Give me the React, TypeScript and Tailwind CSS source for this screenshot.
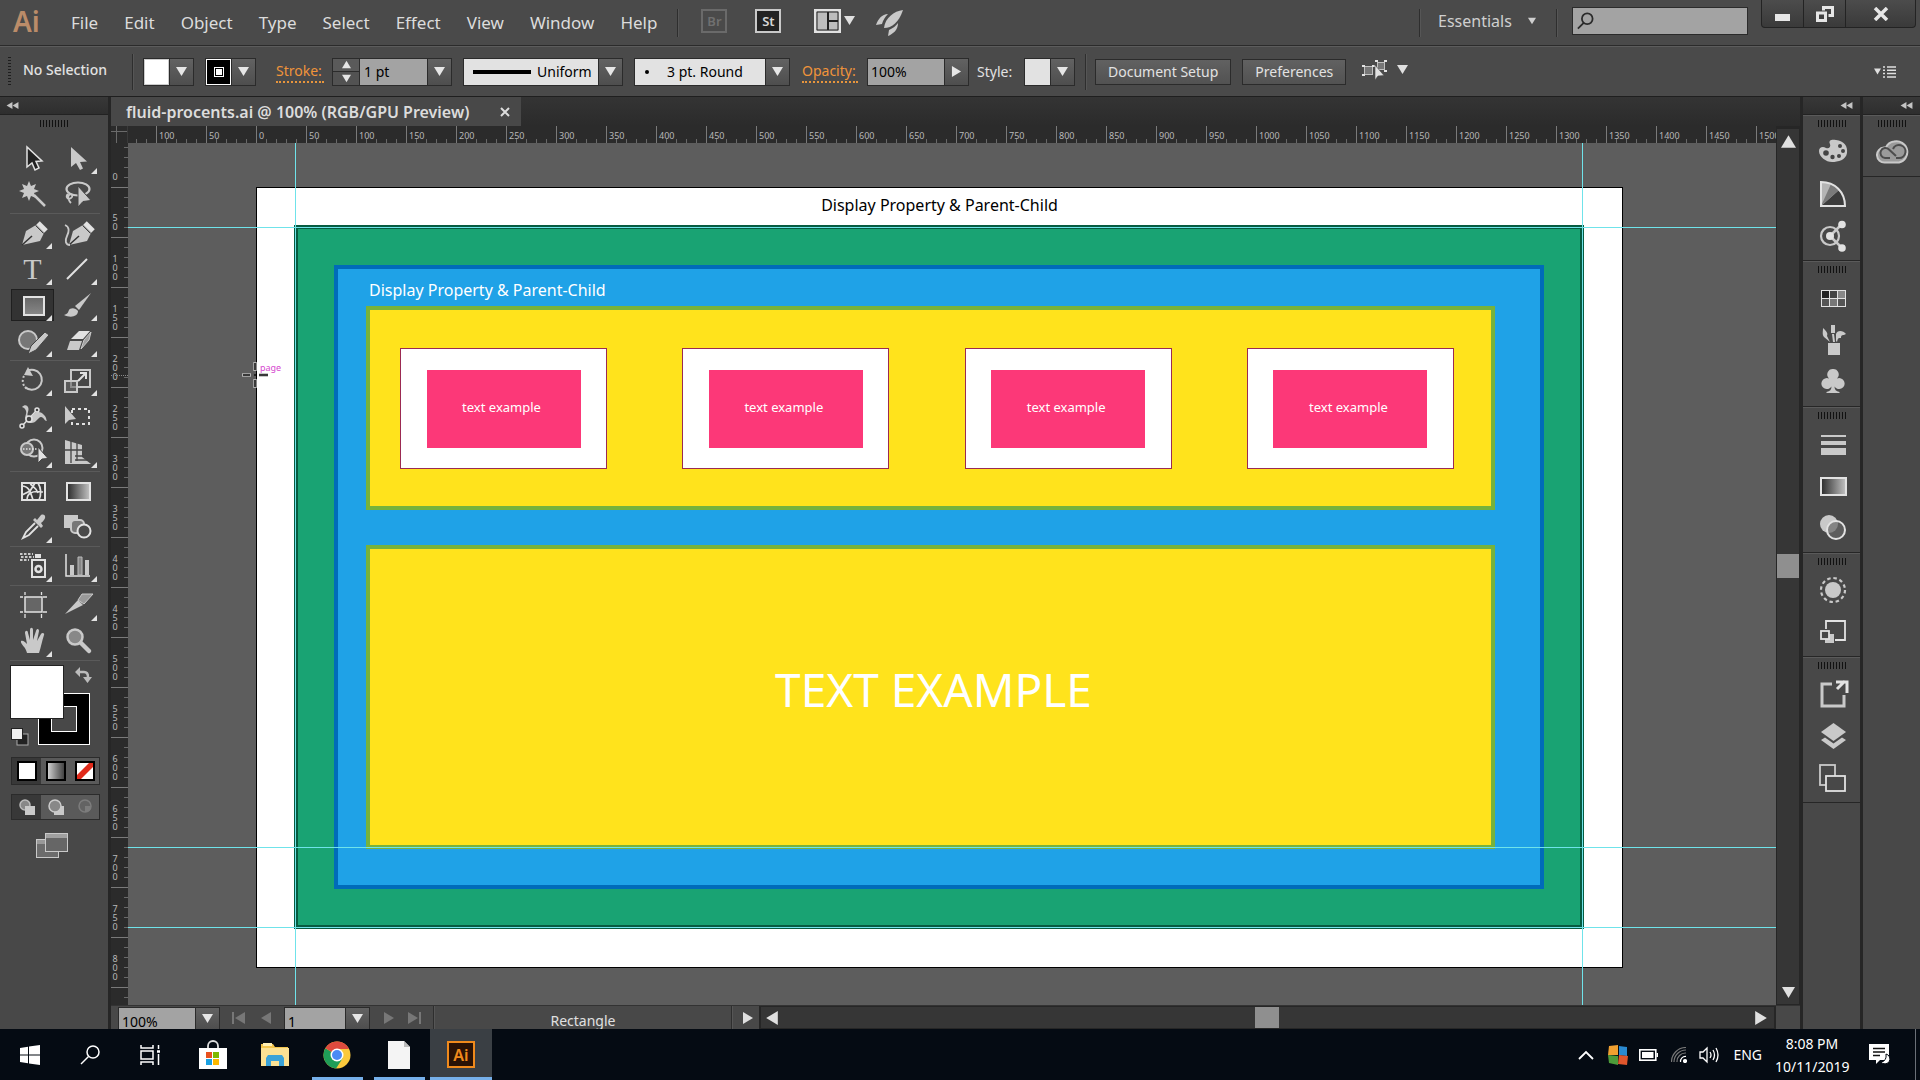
import React from 'react';

const G = '#c9c9c9';
const L = '#e2e2e2';

function Tri({ dir = 'down', size = 12, className = '' }: { dir?: 'down' | 'up' | 'left' | 'right'; size?: number; className?: string }) {
  const pts = {
    down: '0,1 12,1 6,11',
    up: '0,11 12,11 6,1',
    left: '11,0 11,12 1,6',
    right: '1,0 1,12 11,6',
  }[dir];
  return (
    <svg width={size} height={size} viewBox="0 0 12 12" className={`shrink-0 ${className}`} aria-hidden="true">
      <polygon points={pts} fill="currentColor" />
    </svg>
  );
}

function Sep({ className = '' }: { className?: string }) {
  return <span className={`w-[2px] shrink-0 border-l border-[#2e2e2e] bg-[#565656] ${className}`} />;
}

function ArrowBox({ label, dir = 'down' }: { label: string; dir?: 'down' | 'right' }) {
  return (
    <button aria-label={label} className="flex h-full w-6 shrink-0 items-center justify-center border-l border-[#2b2b2b] bg-linear-to-b from-[#626262] to-[#4e4e4e] text-[#e6e6e6]">
      <Tri dir={dir} size={11} />
    </button>
  );
}

const fieldBox = 'flex h-7 shrink-0 items-stretch border border-[#2b2b2b]';

/* ---------- Menu bar ---------- */

function MenuBar() {
  return (
    <header className="flex h-[46px] shrink-0 items-center border-b border-[#2b2b2b] bg-[#4a4a4a] text-[#dcdcdc]">
      <span className="-mt-1 ml-[13px] w-[58px] text-[28px] leading-8 font-semibold text-[#bb8c69]">Ai</span>
      <nav className="flex gap-[26px] text-[17px] leading-6">
        {['File', 'Edit', 'Object', 'Type', 'Select', 'Effect', 'View', 'Window', 'Help'].map((m) => (
          <button key={m}>{m}</button>
        ))}
      </nav>
      <Sep className="ml-5 h-7" />
      <button className="-mt-1 ml-[22px] h-6 w-[26px] border-2 border-[#6a6a6a] text-[13px] leading-5 font-semibold text-[#707070]">Br</button>
      <button className="-mt-1 ml-7 h-6 w-[26px] border-2 border-[#c9c9c9] bg-[#222] text-[13px] leading-5 font-semibold text-[#d6d6d6]">St</button>
      <button aria-label="Arrange documents" className="-mt-1 ml-[33px] flex items-center gap-[3px] text-[#e0e0e0]">
        <svg width="27" height="24" viewBox="0 0 27 24">
          <rect x="1" y="1" width="25" height="22" fill="#bdbdbd" stroke={L} strokeWidth="2" />
          <path d="M3 3h21v18H3z" fill="none" stroke="#222" />
          <path d="M14 3v18M14 12h10" stroke="#222" strokeWidth="2" />
        </svg>
        <Tri size={11} />
      </button>
      <button aria-label="GPU performance" className="ml-[21px]">
        <svg width="28" height="28" viewBox="0 0 28 28" fill={G}>
          <path d="M27 1C18 2 9 9 8 19c8 0 15-6 19-18z" />
          <path d="M12 5C6 5 2 10 0 16l6-1c1-4 3-7 6-10z" />
          <path d="M22 14c-2 3-5 5-9 7l-1 6c5-2 10-6 10-13z" />
        </svg>
      </button>
      <div className="flex-1" />
      <Sep className="h-7" />
      <label className="relative -mt-1 ml-[17px] flex items-center text-[16px] leading-6 text-[#cfcfcf]">
        <select aria-label="Workspace" className="w-[98px] appearance-none bg-transparent outline-none">
          <option>Essentials</option>
        </select>
        <Tri size={8} className="pointer-events-none absolute right-0" />
      </label>
      <Sep className="ml-5 h-7" />
      <label className="-mt-[3px] ml-[14px] flex h-7 w-[176px] items-center border border-[#2b2b2b] bg-[#a3a3a3] px-1">
        <svg width="20" height="20" viewBox="0 0 20 20" fill="none" stroke="#2b2b2b" strokeWidth="2">
          <circle cx="11.500" cy="7.500" r="6" />
          <path d="M7.500 12L1 18.500" />
        </svg>
        <input aria-label="Search" className="w-full bg-transparent text-sm text-black outline-none" />
      </label>
      <div className="mr-1 ml-[13px] flex h-7 self-start rounded-b border border-t-0 border-[#232323] bg-linear-to-b from-[#4c4c4c] to-[#3a3a3a]">
        <button aria-label="Minimize" className="flex w-[42px] items-center justify-center border-r border-[#232323]">
          <span className="mt-2 h-[7px] w-[15px] bg-[#e6e6e6]" />
        </button>
        <button aria-label="Restore" className="flex w-[42px] items-center justify-center border-r border-[#232323]">
          <svg width="18" height="16" viewBox="0 0 18 16" fill="none" stroke="#e6e6e6" strokeWidth="3">
            <path d="M7.500 4.500V1.500h9v8h-4M1.500 7h8v7.500h-8z" />
          </svg>
        </button>
        <button aria-label="Close" className="flex w-[69px] items-center justify-center">
          <svg width="16" height="14" viewBox="0 0 16 14" stroke="#e6e6e6" strokeWidth="3.500">
            <path d="M2 1l12 12M14 1L2 13" />
          </svg>
        </button>
      </div>
    </header>
  );
}

/* ---------- Control bar ---------- */

function ControlBar() {
  return (
    <div className="flex h-[51px] shrink-0 items-center border-t border-b border-t-[#5c5c5c] border-b-[#1f1f1f] bg-[#4a4a4a] text-[14px] leading-5 text-[#e2e2e2]">
      <span className="ml-2 h-[30px] w-[3px] shrink-0 bg-[repeating-linear-gradient(to_bottom,#1e1e1e_0_1px,transparent_1px_3px)]" />
      <span className="-mt-1 ml-3 w-[109px] shrink-0 font-medium">No Selection</span>
      <Sep className="h-9" />
      <div className={`${fieldBox} ml-[9px] w-[51px]`}>
        <button aria-label="Fill colour" className="flex-1 border border-[#ccc] bg-white" />
        <ArrowBox label="Fill options" />
      </div>
      <div className={`${fieldBox} ml-[11px] w-[51px]`}>
        <button aria-label="Stroke colour" className="flex flex-1 items-center justify-center border border-white bg-black">
          <span className="flex size-[10px] items-center justify-center border border-white">
            <span className="size-[6px] bg-white" />
          </span>
        </button>
        <ArrowBox label="Stroke options" />
      </div>
      <label htmlFor="stroke" className="ml-5 w-12 shrink-0 border-b-2 border-dotted border-[#e8953c] text-[#f0943a]">Stroke:</label>
      <div className={`${fieldBox} ml-2 w-[120px]`}>
        <div className="flex w-[26px] flex-col text-[#e6e6e6]">
          <button aria-label="Increase stroke" className="flex flex-1 items-center justify-center border-b border-[#2b2b2b] bg-[#5a5a5a]"><Tri dir="up" size={9} /></button>
          <button aria-label="Decrease stroke" className="flex flex-1 items-center justify-center bg-[#525252]"><Tri size={9} /></button>
        </div>
        <input id="stroke" defaultValue="1 pt" className="w-0 flex-1 border-l border-[#2b2b2b] bg-[#a3a3a3] pl-1 text-black outline-none" />
        <ArrowBox label="Stroke weights" />
      </div>
      <div className={`${fieldBox} relative ml-[11px] w-[160px] bg-[#e2e2e2] text-black`}>
        <span className="ml-[9px] h-1 w-[58px] self-center bg-black" />
        <select aria-label="Width profile" className="w-0 flex-1 appearance-none bg-transparent pl-[6px] outline-none">
          <option>Uniform</option>
        </select>
        <ArrowBox label="Width profiles" />
      </div>
      <div className={`${fieldBox} ml-[11px] w-[156px] bg-[#e2e2e2] text-black`}>
        <span className="ml-[10px] size-1 self-center rounded-full bg-black" />
        <select aria-label="Brush definition" className="w-0 flex-1 appearance-none bg-transparent pl-[18px] outline-none">
          <option>3 pt. Round</option>
        </select>
        <ArrowBox label="Brushes" />
      </div>
      <label htmlFor="opacity" className="ml-3 w-[56px] shrink-0 border-b-2 border-dotted border-[#e8953c] text-[#f0943a]">Opacity:</label>
      <div className={`${fieldBox} ml-[9px] w-[102px]`}>
        <input id="opacity" defaultValue="100%" className="w-0 flex-1 bg-[#a3a3a3] pl-[3px] text-black outline-none" />
        <ArrowBox label="Opacity slider" dir="right" />
      </div>
      <span className="ml-2 w-[38px] shrink-0">Style:</span>
      <div className={`${fieldBox} ml-[9px] w-[51px]`}>
        <button aria-label="Graphic style" className="flex-1 bg-[#e2e2e2]" />
        <ArrowBox label="Graphic styles" />
      </div>
      <Sep className="ml-[10px] h-9" />
      <button className="ml-2 h-[26px] shrink-0 border border-[#2b2b2b] bg-linear-to-b from-[#616161] to-[#525252] px-3">Document Setup</button>
      <button className="ml-[11px] h-[26px] shrink-0 border border-[#2b2b2b] bg-linear-to-b from-[#616161] to-[#525252] px-3">Preferences</button>
      <button aria-label="Select similar" className="-mt-1 ml-4 flex items-center gap-[9px] text-[#e0e0e0]">
        <svg width="26" height="20" viewBox="0 0 26 20" fill="none">
          <rect x="2.500" y="6.500" width="8" height="8" fill="#777" stroke="#c0c0c0" />
          <rect x="15.500" y="2.500" width="7" height="7" fill="#777" stroke="#c0c0c0" />
          <path d="M0 5h3v2H0zM10 5h3v2h-3zM0 14h3v2H0zM13 0h3v2h-3zM22 0h3v2h-3zM22 10h3v2h-3z" fill={L} />
          <path d="M13 5v15l3-4 6-.500z" fill={L} stroke="#4a4a4a" strokeWidth="0.600" />
        </svg>
        <Tri size={11} />
      </button>
      <div className="flex-1" />
      <button aria-label="Panel menu" className="mr-6 flex items-center gap-[2px] text-[#e0e0e0]">
        <Tri size={7} />
        <svg width="13" height="12" viewBox="0 0 13 12" stroke="#e0e0e0" strokeWidth="1.500">
          <path d="M0 1h2M4 1h9M0 4.300h2M4 4.300h9M0 7.600h2M4 7.600h9M0 11h2M4 11h9" />
        </svg>
      </button>
    </div>
  );
}

/* ---------- Tools panel ---------- */

const nib = (
  <>
    <path d="M3 26L7 12l10-6 8 8-4 8z" fill={G} />
    <path d="M3 26l10-9" stroke="#333" strokeWidth="1.500" />
    <path d="M19 4l8 8" stroke={L} strokeWidth="5" />
    <path d="M16.500 6.500l8 8" stroke="#444" strokeWidth="1" />
  </>
);

const I: Record<string, React.ReactNode> = {
  Selection: <path d="M8 3v20l5-4 3 7 4-2-3-6.500 6-.5z" fill="#222" stroke={L} strokeWidth="1.500" />,
  'Direct Selection': <path d="M7 3v20l5-4 4 7 3-1.500-3-6.500 7-.5z" fill={G} />,
  'Magic Wand': (
    <>
      <path d="M10 1l2 5 5-2-2 5 5 2-5 2 2 5-5-2-2 5-2-5-5 2 2-5-5-2 5-2-2-5 5 2z" fill={G} />
      <path d="M15 15l11 11" stroke={G} strokeWidth="2.500" />
    </>
  ),
  Lasso: (
    <>
      <ellipse cx="14" cy="9" rx="11.500" ry="6.500" stroke={G} strokeWidth="2.200" />
      <path d="M4 14c-3 3 0 6 3 4s0-5-2-3 0 6 2 8" stroke={G} strokeWidth="1.800" />
      <path d="M14 6v21l5-5.500 8-1z" fill={G} stroke="#444" />
    </>
  ),
  Pen: nib,
  Curvature: (
    <>
      <g transform="translate(2 0)">{nib}</g>
      <path d="M1 6c5 2 4 7 2 11s-2 9 3 9" stroke={G} strokeWidth="1.800" />
    </>
  ),
  Line: <path d="M3 24L23 4" stroke={L} strokeWidth="2" />,
  Rectangle: <rect x="5" y="6" width="20" height="18" fill="url(#rg)" stroke={L} strokeWidth="2" />,
  Paintbrush: (
    <>
      <path d="M27 2L15 19l-4-4z" fill={G} />
      <path d="M14 20c0 6-8 7-14 4 4-1 4-3 5-5s6-3 9 1z" fill={G} />
    </>
  ),
  Shaper: (
    <>
      <circle cx="9" cy="13" r="9" fill="#777" stroke={G} strokeWidth="2" />
      <path d="M30 8l-4-3-14 14-3 8 8-4z" fill={G} stroke="#444" />
    </>
  ),
  Eraser: (
    <>
      <path d="M3 23l3-9h12l-3 9z" fill={G} />
      <path d="M7 12l8-8h11l-7 8z" fill={L} />
      <path d="M17 22l3-9 7-8-2 8z" fill="#a0a0a0" stroke={G} />
    </>
  ),
  Rotate: (
    <>
      <path d="M8 5a10 10 0 1 1-2 16" stroke={G} strokeWidth="2" />
      <path d="M5 10a10 10 0 0 0 3 13" stroke={G} strokeWidth="2" strokeDasharray="2 2" />
      <path d="M5 9l4-8 5 9z" fill={G} />
    </>
  ),
  Scale: (
    <>
      <rect x="7" y="4" width="19" height="17" stroke={G} strokeWidth="2" />
      <rect x="1" y="15" width="12" height="11" fill="#666" fillOpacity="0.600" stroke={G} strokeWidth="2" />
      <path d="M14 15l7-7M16 7h6v6" stroke={L} strokeWidth="2" />
    </>
  ),
  Width: (
    <>
      <path d="M3 5c4-4 8 0 6 5s2 7 5 3 8-4 11 0c3 3 2 5 3 6-3 0-3-4-6-4s-5 7-11 6-5-6-4-9-1-6-4-7z" fill={G} />
      <path d="M3 24L18 8" stroke={L} strokeWidth="1.500" />
      <circle cx="3" cy="24" r="2" fill="#444" stroke={L} strokeWidth="1.500" />
      <circle cx="18" cy="8" r="2" fill="#444" stroke={L} strokeWidth="1.500" />
      <circle cx="10" cy="17" r="3" fill="#444" stroke={L} strokeWidth="1.500" />
    </>
  ),
  'Free Transform': (
    <>
      <rect x="8" y="7" width="17" height="15" stroke={L} strokeWidth="2" strokeDasharray="3 3" />
      <path d="M1 4v18l4-4 7-1z" fill={G} />
    </>
  ),
  'Shape Builder': (
    <>
      <circle cx="15" cy="10" r="8.500" stroke={G} strokeWidth="2" />
      <circle cx="8" cy="11" r="6" fill="#777" stroke={G} strokeWidth="2" />
      <path d="M4 11h14" stroke={L} strokeWidth="1.500" strokeDasharray="1.500 1.500" />
      <path d="M19 9v16l4-4 6-.5z" fill={L} stroke="#444" />
    </>
  ),
  Perspective: (
    <>
      <path d="M1 2l17 5v12H1z" fill={G} />
      <path d="M1 26h26l-9-7H1z" fill={G} />
      <path d="M7 3v22M13 5v18M1 12h17M11 18h9M11 22h13" stroke="#444" strokeWidth="1.300" />
    </>
  ),
  Mesh: (
    <>
      <rect x="3" y="6" width="23" height="17" fill="#3a3a3a" stroke={L} strokeWidth="2" />
      <path d="M3 9c6 0 8 4 11 14M8 23c0-6 4-10 16-8M11 6c2 4 6 4 8 10M19 6c3 5 4 10 1 17M3 18l8-4 5-8" stroke={L} strokeWidth="1.700" />
    </>
  ),
  Gradient: <rect x="3" y="6" width="23" height="17" fill="url(#gg)" stroke={L} strokeWidth="2" />,
  Eyedropper: (
    <>
      <path d="M16 10l-9 9-3 6 6-3 9-9" stroke={L} strokeWidth="1.800" />
      <path d="M14 7l8 8 2-2-2-3c7-5 4-10 0-8l-4 5-2-2z" fill={G} />
    </>
  ),
  Blend: (
    <>
      <rect x="0" y="2" width="14" height="13" fill={G} />
      <rect x="7" y="7" width="13" height="13" rx="4" fill="#777" stroke={G} strokeWidth="2" />
      <circle cx="20" cy="18" r="6.500" fill="#4a4a4a" stroke={L} strokeWidth="2" />
    </>
  ),
  'Symbol Sprayer': (
    <>
      <rect x="13" y="8" width="13" height="17" fill="#444" stroke={L} strokeWidth="2" />
      <rect x="16" y="2" width="6" height="4" fill={L} />
      <circle cx="19.500" cy="17" r="3" stroke={L} strokeWidth="2.500" />
      <path d="M1 2h13M2 5h13M1 8h9" stroke={G} strokeWidth="1.800" strokeDasharray="2.500 1.500" />
    </>
  ),
  Graph: (
    <>
      <path d="M2 2v22h24" stroke={L} strokeWidth="1.500" />
      <path d="M6 13h4v10H6zM21 8h4v15h-4z" fill={G} />
      <path d="M14 5h4v18h-4z" fill="#888" stroke="#bbb" />
    </>
  ),
  Artboard: (
    <>
      <rect x="6" y="6" width="17" height="15" fill="#666" stroke={L} strokeWidth="1.500" />
      <path d="M6 1v3M6 23v4M22.500 1v3M22.500 23v4M1 6h3M24 6h4M1 21h3M24 21h4" stroke={L} strokeWidth="1.300" />
    </>
  ),
  Slice: (
    <>
      <path d="M14 9l4-6h11l-9 10z" fill="#999" stroke={G} />
      <path d="M1 23L14 9l5 5z" fill={G} />
    </>
  ),
  Hand: <path d="M8 26c-1-6-7-9-6-12 2-1 4 1 6 3L6 6c0-3 3-3 3 0l2 7V3c0-3 3-3 3 0v10l3-9c1-3 3-2 3 0l-2 10 4-7c1-2 4-1 3 1-2 6-3 12-5 18z" fill={G} />,
  Zoom: (
    <>
      <circle cx="11" cy="10" r="7.500" fill="#888" stroke={G} strokeWidth="2.500" />
      <path d="M17 16l8 8" stroke={G} strokeWidth="4.500" strokeLinecap="round" />
    </>
  ),
};

const toolGroups: [string, boolean][][] = [
  [['Selection', false], ['Direct Selection', true], ['Magic Wand', false], ['Lasso', false]],
  [['Pen', true], ['Curvature', false], ['Type', true], ['Line', true], ['Rectangle', true], ['Paintbrush', true], ['Shaper', true], ['Eraser', true]],
  [['Rotate', true], ['Scale', true], ['Width', true], ['Free Transform', false], ['Shape Builder', true], ['Perspective', true]],
  [['Mesh', false], ['Gradient', false], ['Eyedropper', true], ['Blend', false]],
  [['Symbol Sprayer', true], ['Graph', true]],
  [['Artboard', false], ['Slice', true], ['Hand', true], ['Zoom', false]],
];

function Grip() {
  return <span className="mx-auto block h-[7px] w-7 shrink-0 bg-[repeating-linear-gradient(to_right,#111_0_1px,transparent_1px_3px)]" />;
}

function CollapseHeader({ label, className = '' }: { label: string; className?: string }) {
  return (
    <button aria-label={label} className={`flex h-[18px] w-full shrink-0 items-center border-b border-[#222] bg-linear-to-b from-[#383838] to-[#2e2e2e] text-[#c4c4c4] ${className}`}>
      <Tri dir="left" size={7} className="-mr-[1px]" />
      <Tri dir="left" size={7} />
    </button>
  );
}

function Tools() {
  return (
    <aside className="flex w-[111px] shrink-0 flex-col border-r-[3px] border-[#262626] bg-[#484848]">
      <CollapseHeader label="Collapse tools" className="pl-[6px]" />
      <div className="mt-[5px] mb-3"><Grip /></div>
      <div className="mr-2 ml-[10px]">
        {toolGroups.map((g, i) => (
          <div key={i} className="grid grid-cols-2 border-b border-[#5a5a5a] py-[1px]">
            {g.map(([name, fly]) => (
              <button key={name} aria-label={name} className={name === 'Rectangle' ? 'relative flex h-9 items-center justify-center py-[2px]' : 'relative flex h-9 items-center justify-center'}>
                <span className={name === 'Rectangle' ? 'flex h-8 w-[43px] items-center justify-center border border-[#1f1f1f] bg-[#333]' : 'flex items-center justify-center'}>
                  {name === 'Type' ? (
                    <span className="font-['Liberation_Serif',serif] text-[30px] leading-8 text-[#c9c9c9]">T</span>
                  ) : (
                    <svg width="28" height="28" viewBox="0 0 28 28" fill="none" className="overflow-visible">{I[name]}</svg>
                  )}
                </span>
                {fly && (
                  <svg width="6" height="6" viewBox="0 0 6 6" className="absolute right-[3px] bottom-[2px]"><path d="M6 0v6H0z" fill={L} /></svg>
                )}
              </button>
            ))}
          </div>
        ))}
      </div>
      <div className="relative mx-[10px] mt-1 h-20">
        <button aria-label="Stroke swatch" className="absolute top-7 left-7 flex size-[52px] items-center justify-center border border-white bg-black">
          <span className="size-[26px] border border-white bg-[#484848]" />
        </button>
        <button aria-label="Fill swatch" className="absolute top-0 left-0 size-[54px] border border-[#222] bg-white" />
        <button aria-label="Swap" className="absolute top-[2px] left-[65px]">
          <svg width="17" height="16" viewBox="0 0 17 16" fill="none">
            <path d="M5 5h4q4 0 4 5" stroke="#bbb" strokeWidth="2.500" />
            <path d="M0 5l5-5v10zM8 10h9l-4.500 6z" fill="#bbb" />
          </svg>
        </button>
        <button aria-label="Defaults" className="absolute top-[63px] left-[1px]">
          <svg width="18" height="18" viewBox="0 0 18 18">
            <rect x="6" y="6" width="11" height="11" fill="#222" stroke="#aaa" />
            <rect x="0.500" y="0.500" width="11" height="11" fill="#eee" stroke="#222" />
          </svg>
        </button>
      </div>
      <div className="mr-2 ml-[11px] mt-3 grid h-7 grid-cols-3 border border-[#2b2b2b] bg-[#5a5a5a]">
        <button aria-label="Color" className="flex items-center justify-center bg-[#383838]"><span className="size-5 border-2 border-black bg-white" /></button>
        <button aria-label="Gradient fill" className="flex items-center justify-center"><span className="size-5 border-2 border-black bg-linear-to-r from-[#d0d0d0] to-[#444]" /></button>
        <button aria-label="None" className="flex items-center justify-center">
          <svg width="20" height="20" viewBox="0 0 20 20"><rect x="1" y="1" width="18" height="18" fill="#fff" stroke="#000" strokeWidth="2" /><path d="M2 18v-4L14 2h4v4L6 18z" fill="#e02a1a" /></svg>
        </button>
      </div>
      <div className="mr-2 ml-[11px] mt-[9px] grid h-[26px] grid-cols-3 border border-[#2b2b2b] bg-[#5a5a5a]">
        <button aria-label="Draw normal" className="flex items-center justify-center bg-[#383838]">
          <svg width="16" height="16" viewBox="0 0 16 16"><circle cx="6" cy="6" r="5" fill="#888" stroke="#bbb" strokeWidth="1.500" /><path d="M6 7h10v9H6z" fill={G} /></svg>
        </button>
        <button aria-label="Draw behind" className="flex items-center justify-center">
          <svg width="16" height="16" viewBox="0 0 16 16"><path d="M6 7h10v9H6z" fill={G} /><circle cx="7" cy="7" r="6" fill="#888" stroke="#ccc" strokeWidth="1.500" /></svg>
        </button>
        <button aria-label="Draw inside" className="flex items-center justify-center">
          <svg width="16" height="16" viewBox="0 0 16 16"><circle cx="8" cy="7" r="6" fill="#636363" stroke="#7c7c7c" strokeWidth="1.500" /><path d="M8 7h6c0 4-2 6-6 6z" fill="#7c7c7c" /></svg>
        </button>
      </div>
      <button aria-label="Screen mode" className="mt-[13px] ml-9 self-start">
        <svg width="32" height="26" viewBox="0 0 32 26" stroke={G}>
          <rect x="0.500" y="6.500" width="22" height="18" fill="#6c6c6c" />
          <path d="M1 7h21v4H1z" fill="#999" stroke="none" />
          <rect x="9.500" y="0.500" width="22" height="18" fill="#666" />
          <path d="M10 1h21v4H10z" fill="#a0a0a0" stroke="none" />
        </svg>
      </button>
    </aside>
  );
}

/* ---------- Document ---------- */

const hLabels = [100, 50, ...Array.from({ length: 31 }, (_, i) => i * 50)];
const vLabels = Array.from({ length: 17 }, (_, i) => i * 50);

function HRuler() {
  return (
    <div className="flex h-[17px] shrink-0 bg-[#2b2b2b]">
      <div className="relative w-[17px] shrink-0 border-r border-[#3a3a3a]">
        <span className="absolute inset-x-0 top-[5px] border-t border-[#6a6a6a]" />
        <span className="absolute inset-y-0 left-[5px] border-l border-[#6a6a6a]" />
      </div>
      <div className="flex w-0 flex-1 overflow-hidden">
        <div className="flex w-7 shrink-0 items-end bg-[repeating-linear-gradient(to_left,transparent_0_9px,#6a6a6a_9px_10px)] bg-[length:100%_4px] bg-bottom bg-no-repeat" />
        {hLabels.map((n, i) => (
          <div key={i} className="w-[50px] shrink-0 border-l border-[#7a7a7a] bg-[repeating-linear-gradient(to_right,transparent_0_9px,#6a6a6a_9px_10px)] bg-[length:100%_4px] bg-bottom bg-no-repeat pl-[2px] text-[9px] leading-5 text-[#b8b8b8]">
            {n}
          </div>
        ))}
      </div>
    </div>
  );
}

function VRuler() {
  return (
    <div className="relative w-[17px] shrink-0 overflow-hidden bg-[#2b2b2b]">
      <div className="absolute inset-x-0 top-0">
        {vLabels.map((n, i) => (
          <div key={n} className={`flex flex-col items-center justify-end border-b border-[#7a7a7a] bg-[repeating-linear-gradient(to_top,transparent_0_9px,#6a6a6a_9px_10px)] bg-[length:4px_100%] bg-right bg-no-repeat pr-2 pb-[6px] text-[9px] leading-[9px] text-[#b8b8b8] ${i === 0 ? 'h-[45px]' : 'h-[50px]'}`}>
            <span className="w-[6px] break-all">{n}</span>
          </div>
        ))}
        <div className="h-5 bg-[repeating-linear-gradient(to_bottom,transparent_0_9px,#6a6a6a_9px_10px)] bg-[length:4px_100%] bg-right bg-no-repeat" />
      </div>
      <span className="absolute inset-x-0 top-[232px] border-t border-dotted border-[#8a8a8a]" />
    </div>
  );
}

function Canvas() {
  return (
    <main className="relative w-0 flex-1 overflow-hidden bg-[#5d5d5d] font-['Noto_Sans',sans-serif]">
      <article className="absolute top-[44px] left-[128px] flex h-[781px] w-[1367px] flex-col border border-black bg-white">
        <h1 className="pt-[5px] pb-2 text-center text-[16px] leading-6 text-black">Display Property &amp; Parent-Child</h1>
        <div className="mr-[38px] mb-[38px] ml-[37px] flex flex-1 border-4 border-[#075c41] bg-[#19a373] p-9">
          <section className="flex flex-1 flex-col border-4 border-[#006bb9] bg-[#1fa2e7] pr-[45px] pb-9 pl-7">
            <h2 className="h-[37px] pt-[9px] pl-[3px] text-[16px] leading-6 text-white">Display Property &amp; Parent-Child</h2>
            <div className="flex h-[204px] items-start justify-between border-4 border-[#76b23c] bg-[#ffe31c] pt-[38px] pr-[37px] pl-[30px]">
              {[0, 1, 2, 3].map((n) => (
                <div key={n} className="flex h-[121px] w-[207px] items-center justify-center border border-[#9b2a52] bg-white">
                  <div className="flex h-[78px] w-[154px] items-center justify-center bg-[#fc3878] pr-1 pb-1 text-[13px] leading-5 text-white">text example</div>
                </div>
              ))}
            </div>
            <div className="mt-[35px] flex flex-1 items-center justify-center border-4 border-[#76b23c] bg-[#ffe31c] pb-4 pl-[6px] text-[46px] leading-[60px] text-white">
              TEXT EXAMPLE
            </div>
          </section>
        </div>
      </article>
      <span className="absolute inset-y-0 left-[167px] w-px bg-[#6fe3ea]" />
      <span className="absolute inset-y-0 left-[1454px] w-px bg-[#6fe3ea]" />
      <span className="absolute inset-x-0 top-[84px] h-px bg-[#6fe3ea]" />
      <span className="absolute inset-x-0 top-[704px] h-px bg-[#6fe3ea]" />
      <span className="absolute inset-x-0 top-[784px] h-px bg-[#6fe3ea]" />
      <span className="absolute top-[217px] left-[132px] text-[9px] leading-4 text-[#d648cf]">page</span>
      <svg width="28" height="28" viewBox="0 0 28 28" className="absolute top-[218px] left-[113px]">
        <path d="M14 1v9M14 18v9M1 14h9M18 14h9" stroke="#b5b5b5" strokeWidth="3.500" />
        <path d="M14 2v7M14 19v7M2 14h7M18 14h9M13 14h2" stroke="#111" strokeWidth="1.500" />
      </svg>
    </main>
  );
}

function StatusBar() {
  return (
    <footer className="flex h-6 shrink-0 border-t border-[#333] bg-[#484848] text-[14px] leading-5 text-[#e0e0e0]">
      <div className="mt-[1px] ml-[7px] flex w-[102px] border border-b-0 border-[#2b2b2b]">
        <input aria-label="Zoom level" defaultValue="100%" className="w-0 flex-1 bg-[#a3a3a3] pt-[6px] pl-[3px] text-black outline-none" />
        <ArrowBox label="Zoom levels" />
      </div>
      <div className="ml-3 flex items-center gap-[14px] text-[#777]">
        <button aria-label="First artboard" className="flex"><span className="w-[2px] bg-[#777]" /><Tri dir="left" size={12} /></button>
        <button aria-label="Previous artboard"><Tri dir="left" size={12} /></button>
      </div>
      <div className="mt-[1px] ml-3 flex w-[86px] border border-b-0 border-[#2b2b2b]">
        <input aria-label="Artboard" defaultValue="1" className="w-0 flex-1 bg-[#a3a3a3] pt-[6px] pl-[3px] text-black outline-none" />
        <ArrowBox label="Artboards" />
      </div>
      <div className="ml-[13px] flex items-center gap-3 text-[#777]">
        <button aria-label="Next artboard"><Tri dir="right" size={12} /></button>
        <button aria-label="Last artboard" className="flex"><Tri dir="right" size={12} /><span className="w-[2px] bg-[#777]" /></button>
      </div>
      <Sep className="ml-3" />
      <span className="w-[296px] shrink-0 pt-[5px] text-center">Rectangle</span>
      <Sep />
      <button aria-label="Status options" className="flex w-[26px] shrink-0 items-center justify-center"><Tri dir="right" size={12} className="ml-1" /></button>
      <div className="flex flex-1 items-center border-x-2 border-y border-[#262626] bg-[#363636]">
        <button aria-label="Scroll left" className="w-6 pl-1"><Tri dir="left" size={14} /></button>
        <span className="flex-[471]" />
        <span className="h-full w-6 bg-[#8f8f8f]" />
        <span className="flex-[472]" />
        <button aria-label="Scroll right" className="w-6 pl-1"><Tri dir="right" size={14} /></button>
      </div>
      <span className="w-6 shrink-0" />
    </footer>
  );
}

function DocumentArea() {
  return (
    <section className="flex w-0 flex-1 flex-col">
      <div className="flex h-[29px] shrink-0 items-end bg-linear-to-b from-[#343434] to-[#2b2b2b]">
        <div className="flex h-full items-center bg-[#484848] pr-[11px] pl-[15px] text-[16px] leading-6 font-semibold text-[#dcdcdc]">
          <span className="whitespace-pre">fluid-procents.ai @ 100% (RGB/GPU Preview)</span>
          <button aria-label="Close tab" className="ml-[31px]">
            <svg width="10" height="10" viewBox="0 0 10 10" stroke="#dcdcdc" strokeWidth="2"><path d="M1 1l8 8M9 1L1 9" /></svg>
          </button>
        </div>
      </div>
      <div className="flex min-h-0 flex-1">
        <div className="flex w-0 flex-1 flex-col">
          <HRuler />
          <div className="flex min-h-0 flex-1">
            <VRuler />
            <Canvas />
          </div>
        </div>
        <div className="mt-[3px] flex w-6 shrink-0 flex-col items-center border-x border-b border-[#262626] bg-[#363636] text-[#e0e0e0]">
          <button aria-label="Scroll up" className="flex h-6 items-center"><Tri dir="up" size={15} /></button>
          <span className="flex-[400]" />
          <span className="h-6 w-full bg-[#8f8f8f]" />
          <span className="flex-[402]" />
          <button aria-label="Scroll down" className="flex h-6 items-center"><Tri size={13} /></button>
        </div>
      </div>
      <StatusBar />
    </section>
  );
}

/* ---------- Right dock ---------- */

const P: Record<string, React.ReactNode> = {
  Color: (
    <>
      <path d="M11 6c-2-4 2-5 6-4 8 1 12 6 11 13-1 7-9 9-15 9S0 19 0 13c0-4 4-5 7-3 3 1 5-1 4-4z" fill={G} />
      <g fill="#444"><circle cx="7" cy="15" r="2.800" /><circle cx="13.500" cy="19" r="2.200" /><circle cx="20" cy="18" r="2" /><circle cx="24" cy="13" r="2" /><circle cx="21" cy="8" r="2" /></g>
    </>
  ),
  'Color Guide': (
    <>
      <path d="M2 2c14 0 24 10 24 24H2z" fill="#b4b4b4" />
      <path d="M2 26L26 26C26 20 24 15 20 10z" fill="#3c3c3c" />
      <path d="M2 26L20 10c-2-3-5-5-8-6z" fill="#7a7a7a" />
      <path d="M2 2c14 0 24 10 24 24H2z" stroke={L} strokeWidth="2" />
    </>
  ),
  'Color Themes': (
    <>
      <circle cx="11" cy="14" r="9" stroke={G} strokeWidth="2.200" />
      <path d="M11 14L23 2M11 14l12 12" stroke={G} strokeWidth="2.500" />
      <g fill={L}><circle cx="11" cy="14" r="4" /><circle cx="23" cy="2.500" r="3.800" /><circle cx="23" cy="26" r="3.800" /></g>
    </>
  ),
  Swatches: (
    <>
      <path d="M2 6h25v17H2z" fill={L} />
      <path d="M3 7h7v7H3z" fill="#222" /><path d="M11 7h7v7h-7z" fill="#444" /><path d="M19 7h7v7h-7z" fill="#888" />
      <path d="M3 15h7v7H3zM19 15h7v7h-7z" fill="#555" /><path d="M11 15h7v7h-7z" fill="#777" />
    </>
  ),
  Brushes: (
    <>
      <path d="M9 17h12v12H9z" fill={G} />
      <path d="M4 2c4 4 5 5 4 8l3 6-6-5C3 8 4 6 4 2z" fill={G} />
      <path d="M12-1h4v8h-4zM13 8h2l1 8h-2z" fill={G} />
      <path d="M17 8c1-4 7-4 10 0-3 2-5 0-5 4-3 0-3 0-4 4l-1-1z" fill={G} />
    </>
  ),
  Symbols: <path d="M14 1a5.500 5.500 0 0 1 4 9.500 5.500 5.500 0 1 1-2.500 8c0 3 1.500 5 5 5.500v1H7.500v-1c3.500-.5 5-2.500 5-5.500a5.500 5.500 0 1 1-2.500-8A5.500 5.500 0 0 1 14 1z" fill={G} />,
  Stroke: <path d="M2 5h25v2H2zM2 11h25v4H2zM2 18h25v7H2z" fill={G} />,
  Gradient: <rect x="2" y="6" width="25" height="17" fill="url(#gg)" stroke={L} strokeWidth="2" />,
  Transparency: (
    <>
      <circle cx="10" cy="10" r="9" fill={G} />
      <circle cx="17" cy="16" r="9" fill="#666" fillOpacity="0.700" stroke={L} strokeWidth="2" />
    </>
  ),
  Appearance: (
    <>
      <circle cx="14" cy="14" r="8" fill={G} />
      <circle cx="14" cy="14" r="12" stroke={G} strokeWidth="2.200" strokeDasharray="3.500 2.783" />
    </>
  ),
  'Graphic Styles': (
    <>
      <path d="M7 11V3h19v19H16" stroke={L} strokeWidth="1.800" />
      <path d="M6 16h9v9H6z" fill={G} />
      <rect x="2" y="13" width="8" height="8" fill="#484848" stroke={L} strokeWidth="1.800" />
    </>
  ),
  'Asset Export': (
    <>
      <path d="M13 4H3v22h22V15" stroke={G} strokeWidth="3" />
      <path d="M18 9l8-8M17 2h11v11" stroke={L} strokeWidth="3" />
    </>
  ),
  Layers: (
    <>
      <path d="M14.500 1L27 10l-12.500 9L2 10z" fill={G} />
      <path d="M2 18l4-2.500 8.500 6 8.500-6 4 2.500-12.500 9z" fill={G} />
    </>
  ),
  Artboards: (
    <>
      <rect x="1" y="1" width="15" height="20" stroke={G} strokeWidth="1.800" />
      <rect x="7" y="12" width="19" height="15" fill="#484848" stroke={L} strokeWidth="1.800" />
    </>
  ),
};

const dock = [
  ['Color', 'Color Guide', 'Color Themes'],
  ['Swatches', 'Brushes', 'Symbols'],
  ['Stroke', 'Gradient', 'Transparency'],
  ['Appearance', 'Graphic Styles'],
  ['Asset Export', 'Layers', 'Artboards'],
];

function Dock() {
  return (
    <aside className="flex shrink-0 bg-[#484848]">
      <div className="w-[60px] border-l-[3px] border-[#262626]">
        <CollapseHeader label="Expand panels" className="justify-end pr-[7px]" />
        {dock.map((g, i) => (
          <div key={i} className="border-t border-b border-t-[#5a5a5a] border-b-[#262626] pt-1 pb-[3px]">
            <Grip />
            <div className="mt-1">
              {g.map((n) => (
                <button key={n} aria-label={n} className="flex h-[42px] w-full items-center justify-center pl-[2px]">
                  <svg width="28" height="28" viewBox="0 0 28 28" fill="none" className="overflow-visible">{P[n]}</svg>
                </button>
              ))}
            </div>
          </div>
        ))}
      </div>
      <div className="w-[60px] border-l-[3px] border-[#262626]">
        <CollapseHeader label="Expand libraries" className="justify-end pr-[7px]" />
        <div className="border-t border-b border-t-[#5a5a5a] border-b-[#262626] pt-1 pb-[2px]">
          <Grip />
          <button aria-label="Libraries" className="mt-[3px] flex h-11 w-full items-center justify-center pl-[3px]">
            <svg width="34" height="24" viewBox="0 0 34 24" fill="none">
              <path d="M9 22.500a7.500 7.500 0 0 1-1-15h2a10 10 0 0 1 8-6 10.500 10.500 0 0 1 5 21z" fill="#9a9a9a" stroke={G} strokeWidth="2" />
              <path d="M20 18h3a6.500 6.500 0 1 0-6-9M20 16L13 9.500a5 5 0 1 0-4 8.500h5" stroke="#4c4c4c" strokeWidth="2" />
            </svg>
          </button>
        </div>
      </div>
    </aside>
  );
}

/* ---------- Taskbar ---------- */

function Taskbar() {
  const cell = 'relative flex w-[60px] shrink-0 items-center justify-center';
  const app = 'relative flex w-[62px] shrink-0 items-center justify-center';
  const bar = <span className="absolute bottom-0 h-[3px] w-[51px] bg-[#76b0ea]" />;
  return (
    <div className="flex h-[51px] shrink-0 bg-[#050b13] text-[14px] text-white">
      <button aria-label="Start" className={cell}>
        <svg width="20" height="20" viewBox="0 0 20 20" fill="#fff"><path d="M0 3l8-1.200V9.500H0zM9 1.600L20 0v9.500H9zM0 10.500h8v7.700L0 17zM9 10.500h11V20L9 18.400z" /></svg>
      </button>
      <button aria-label="Search" className={cell}>
        <svg width="20" height="20" viewBox="0 0 20 20" fill="none" stroke="#fff" strokeWidth="1.500"><circle cx="13" cy="7" r="6" /><path d="M8.500 11.500L1 19" /></svg>
      </button>
      <button aria-label="Task view" className={cell}>
        <svg width="20" height="20" viewBox="0 0 20 20" fill="none" stroke="#fff" strokeWidth="1.500"><path d="M1 0v3h12V0M1 6h12v8H1zM1 20v-3h12v3M18.500 0v4M18.500 9v11" /><path d="M17 6.500h3" strokeWidth="2.500" /></svg>
      </button>
      <button aria-label="Store" className={`${app} ml-[2px]`}>
        <svg width="30" height="30" viewBox="0 0 30 30"><path d="M10 9V6a5 5 0 0 1 10 0v3" fill="none" stroke="#ddd" strokeWidth="1.800" /><path d="M1 8h28v21H1z" fill="#fff" /><path d="M8 12h6v6H8z" fill="#e8511f" /><path d="M15 12h6v6h-6z" fill="#7fb900" /><path d="M8 19h6v6H8z" fill="#1ba1e2" /><path d="M15 19h6v6h-6z" fill="#fdb900" /></svg>
      </button>
      <button aria-label="File Explorer" className={app}>
        <svg width="28" height="24" viewBox="0 0 28 24"><path d="M0 1h12l2 3h13v19H0z" fill="#f3c64f" /><path d="M2 0h9v3H2z" fill="#fff0b5" /><path d="M0 5h28v18H0z" fill="#fce294" /><path d="M5 23V15l2-3h14l2 3v8h-5v-5h-8v5z" fill="#3ba3d8" /></svg>
      </button>
      <button aria-label="Chrome" className={app}>
        <svg width="28" height="28" viewBox="0 0 28 28">
          <circle cx="14" cy="14" r="13.500" fill="#fbc93c" />
          <path d="M14 14L2.300 7.300A13.500 13.500 0 0 0 13 27.500l6.500-10z" fill="#1f9d57" />
          <path d="M14 14L2.300 7.300A13.500 13.500 0 0 1 26 8H14z" fill="#dd4b3e" />
          <circle cx="14" cy="14" r="6.500" fill="#fff" /><circle cx="14" cy="14" r="5" fill="#4a8af4" />
        </svg>
        {bar}
      </button>
      <button aria-label="Document" className={app}>
        <svg width="22" height="28" viewBox="0 0 22 28"><path d="M0 0h16l6 6v22H0z" fill="#f4f4f4" /><path d="M16 0v6h6z" fill="#bbb" /></svg>
        {bar}
      </button>
      <button className={`${app} bg-[#3a3f44]`}>
        <span className="flex h-[27px] w-7 items-center justify-center border-2 border-[#f08a1c] bg-[#2a1205] text-[16px] leading-5 font-semibold text-[#f08a1c]">Ai</span>
        <span className="absolute inset-x-0 bottom-0 h-[3px] bg-[#76b0ea]" />
      </button>
      <div className="flex-1" />
      <div className="flex items-center">
        <svg width="16" height="10" viewBox="0 0 16 10" fill="none" stroke="#fff" strokeWidth="1.800"><path d="M1 9l7-7 7 7" /></svg>
        <svg width="20" height="20" viewBox="0 0 20 20" className="ml-[14px]"><path d="M1 1l9-1v10H0z" fill="#f0a030" /><path d="M11 1l8 1v9l-8-1z" fill="#2a8ad0" /><path d="M0 10l10 1v9L1 18z" fill="#4d9b3a" /><path d="M11 10l9 1-1 9-9-1z" fill="#e0562c" /></svg>
        <svg width="19" height="12" viewBox="0 0 19 12" className="ml-[11px]"><rect x="0.800" y="0.800" width="16" height="10.400" fill="none" stroke="#fff" strokeWidth="1.600" /><path d="M3 3h11.500v6H3zM17.500 4H19v4h-1.500z" fill="#fff" /></svg>
        <svg width="16" height="16" viewBox="0 0 16 16" fill="none" stroke="#fff" strokeWidth="1.200" className="ml-[13px]"><circle cx="14" cy="14" r="1.500" fill="#fff" /><path d="M9.500 15a5 5 0 0 1 5.500-5.500" /><path d="M6 15A8.500 8.500 0 0 1 15 6M3 15A12 12 0 0 1 15 3M0.500 15A14.500 14.500 0 0 1 15 0.500" stroke="#777" /></svg>
        <svg width="20" height="18" viewBox="0 0 20 18" fill="none" stroke="#fff" strokeWidth="1.300" className="ml-3"><path d="M1 6h3l4-4v14l-4-4H1zM11 6q2 3 0 6M14 4q3 5 0 10M17 2q4 7 0 14" /></svg>
        <span className="ml-[14px]">ENG</span>
        <time className="ml-[13px] w-[74px] text-center leading-[23px]">8:08 PM<br />10/11/2019</time>
        <svg width="22" height="22" viewBox="0 0 22 22" className="ml-5"><path d="M0 0h20v16h-9l-4 4v-4H0z" fill="#fff" /><path d="M4 4.500h12M4 8h12M4 11.500h7" stroke="#111" strokeWidth="1.500" /><path d="M17 10a5 5 0 1 1-5 8q6-1 5-8z" fill="#fff" stroke="#050b13" /></svg>
        <span className="mr-1 ml-6 h-[51px] w-px bg-[#6b7077]" />
      </div>
    </div>
  );
}

export default function App() {
  return (
    <div className="flex h-screen w-full flex-col overflow-hidden bg-[#262626] font-['Noto_Sans','Open_Sans',sans-serif]">
      <svg width="0" height="0" className="absolute" aria-hidden="true">
        <defs>
          <linearGradient id="rg" x1="0" y1="0" x2="0" y2="1"><stop offset="0" stopColor="#666" /><stop offset="1" stopColor="#888" /></linearGradient>
          <linearGradient id="gg"><stop offset="0" stopColor="#2a2a2a" /><stop offset="1" stopColor="#c4c4c4" /></linearGradient>
        </defs>
      </svg>
      <MenuBar />
      <ControlBar />
      <div className="flex min-h-0 flex-1">
        <Tools />
        <DocumentArea />
        <Dock />
      </div>
      <Taskbar />
    </div>
  );
}
